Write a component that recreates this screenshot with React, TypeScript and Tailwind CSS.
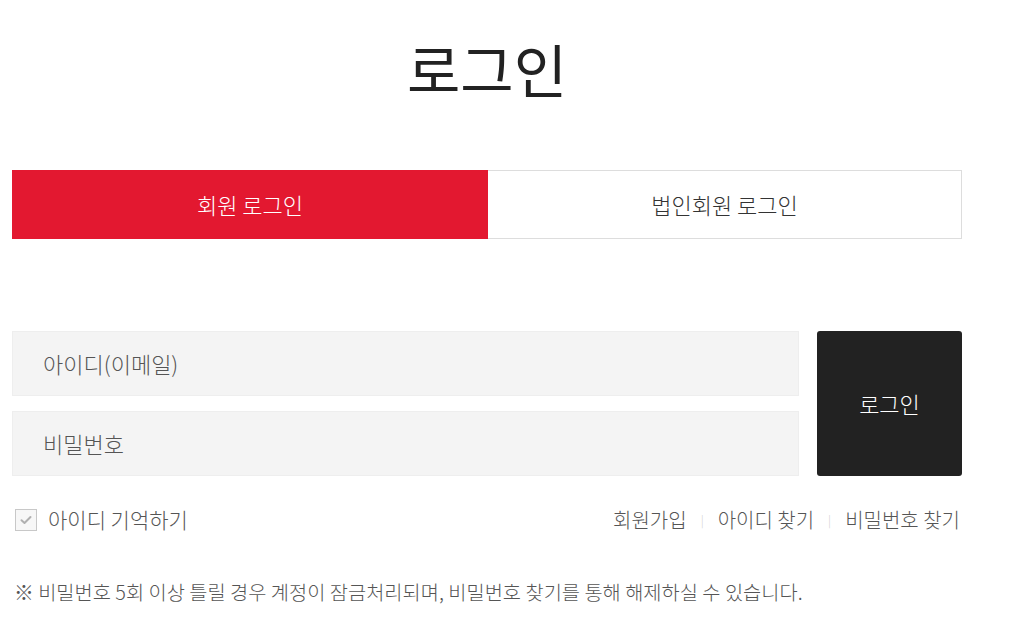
import React from "react";

const font = { fontFamily: '"Noto Sans CJK KR", "Noto Sans", sans-serif' };

function Checkbox() {
	return (
		<span className="w-[22px] h-[22px] border border-[#c8c8c8] bg-[#f7f7f7] flex items-center justify-center">
			<svg width="14" height="14" viewBox="0 0 14 14" fill="none">
				<path d="M2.5 7.2l3 2.8 6-6" stroke="#b0b0b0" strokeWidth="2" strokeLinecap="round" strokeLinejoin="round" />
			</svg>
		</span>
	);
}

export default function App() {
	return (
		<div className="bg-white min-h-[644px] w-[1024px]" style={font}>
			<div className="ml-[12px] w-[950px]">
				<h1 className="pt-[34px] mb-[68px] text-center text-[58px] leading-[68px] font-normal text-[#222]">
					로그인
				</h1>

				<div className="flex h-[69px]">
					<button className="w-[476px] bg-[#e31830] text-white text-[22px] font-light">
						회원 로그인
					</button>
					<button className="flex-1 border border-l-0 border-[#dddddd] text-[#333] text-[22px] font-light">
						법인회원 로그인
					</button>
				</div>

				<div className="mt-[92px] flex gap-[18px]">
					<div className="w-[787px] flex flex-col gap-[15px]">
						<div className="h-[65px] bg-[#f4f4f4] border border-[#eeeeee] pl-[30px] flex items-center text-[22px] font-light text-[#555]">
							아이디(이메일)
						</div>
						<div className="h-[65px] bg-[#f4f4f4] border border-[#eeeeee] pl-[30px] flex items-center text-[22px] font-light text-[#555]">
							비밀번호
						</div>
					</div>
					<button className="w-[145px] h-[145px] bg-[#222222] rounded-[3px] text-white text-[22px] font-light">
						로그인
					</button>
				</div>

				<div className="mt-[30px] h-[28px] flex items-center justify-between">
					<label className="ml-[3px] flex items-center gap-[11px] text-[21px] font-light text-[#555]">
						<Checkbox />
						아이디 기억하기
					</label>
					<div className="mr-[2px] flex items-center text-[20px] font-light text-[#555]">
						<span>회원가입</span>
						<span className="mx-[14px] text-[12px] text-[#d0d0d0]">|</span>
						<span>아이디 찾기</span>
						<span className="mx-[14px] text-[12px] text-[#d0d0d0]">|</span>
						<span>비밀번호 찾기</span>
					</div>
				</div>

				<p className="mt-[44px] ml-[2px] text-[19.8px] leading-[28px] font-light text-[#555]">
					※ 비밀번호 5회 이상 틀릴 경우 계정이 잠금처리되며, 비밀번호 찾기를 통해 해제하실 수 있습니다.
				</p>
			</div>
		</div>
	);
}
